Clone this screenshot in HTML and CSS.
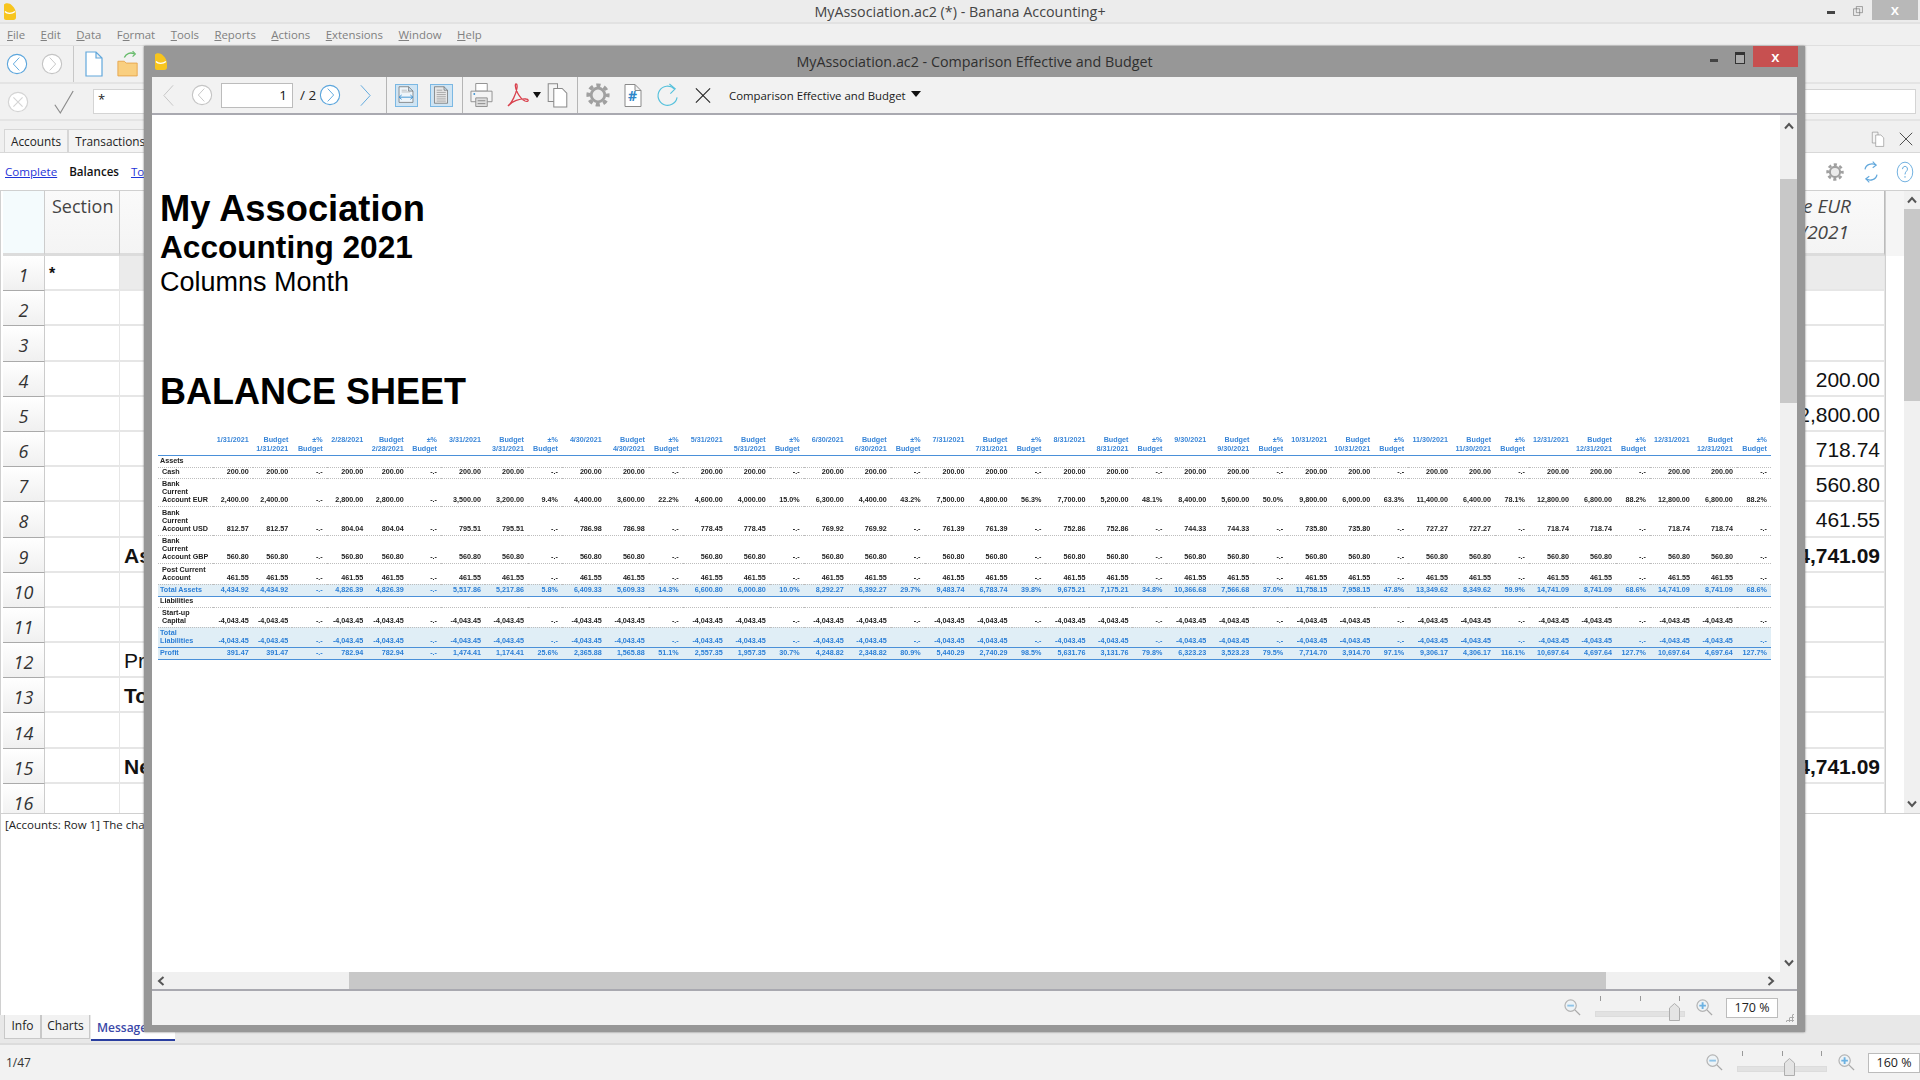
FILE: index.html
```html
<!DOCTYPE html>
<html lang="en">
<head>
<meta charset="utf-8">
<title>MyAssociation.ac2 (*) - Banana Accounting+</title>
<link rel="stylesheet" href="styles.css">
</head>
<body>
<svg class="defs" width="0" height="0" aria-hidden="true">
  <defs>
    <symbol id="logo" viewBox="0 0 12 17"><path d="M0 1.5 C2 -.5 6 0 8 2.500 C11 5 12 8 12 12 L12 14.500 C12 16 11 17 9.500 17 L2 17 C.8 17 0 16 0 15 Z" fill="#f7c51e"/><path d="M1 8.500 C3 11 8 11 11 8.500" fill="none" stroke="#fff" stroke-width="1.300"/></symbol>
    <symbol id="circ-l" viewBox="0 0 24 24"><circle cx="12" cy="12" r="10.500" fill="#fff" stroke="currentColor" stroke-width="1.200"/><polyline points="14.500,5 8,12 14.500,19" fill="none" stroke="currentColor" stroke-width="1"/></symbol>
    <symbol id="circ-r" viewBox="0 0 24 24"><circle cx="12" cy="12" r="10.500" fill="#fff" stroke="currentColor" stroke-width="1.200"/><polyline points="9.500,5 16,12 9.500,19" fill="none" stroke="currentColor" stroke-width="1"/></symbol>
    <symbol id="chev-l" viewBox="0 0 14 24"><polyline points="12,1 2,12 12,23" fill="none" stroke="currentColor" stroke-width="1"/></symbol>
    <symbol id="chev-r" viewBox="0 0 14 24"><polyline points="2,1 12,12 2,23" fill="none" stroke="currentColor" stroke-width="1"/></symbol>
    <symbol id="page" viewBox="0 0 18 26"><path d="M1 1 H11 L17 7 V25 H1 Z M11 1 V7 H17" fill="#fff" stroke="#62a8dc" stroke-width="1.200"/></symbol>
    <symbol id="folder" viewBox="0 0 24 30"><path d="M1 12 H8 L10 14 H22 V28 H1 Z" fill="#f9cf80" stroke="#e6a44c"/><path d="M8 8 C10 3 15 2 19 4" fill="none" stroke="#66bb6a" stroke-width="1.500"/><polyline points="17,1 20,4 17,7" fill="none" stroke="#66bb6a" stroke-width="1.300"/></symbol>
    <symbol id="tick" viewBox="0 0 24 28"><polyline points="2,17 8,26 22,2" fill="none" stroke="#8c8c8c" stroke-width="1.300"/></symbol>
    <symbol id="x-circ" viewBox="0 0 24 24"><circle cx="12" cy="12" r="10.500" fill="#fff" stroke="#d4d4d4" stroke-width="1.300"/><path d="M7 7 L17 17 M17 7 L7 17" stroke="#d4d4d4" stroke-width="1.200"/></symbol>
    <symbol id="fit-w" viewBox="0 0 22 23"><path d="M3 2 H14 L19 7 V20 H3 Z M14 2 V7 H19" fill="#eef5fa" stroke="#666" stroke-width=".8"/><path d="M6 6 H12 M6 8 H16" stroke="#aaa" stroke-width=".8"/><path d="M3 14 H19 M6 11.500 L3 14 L6 16.500 M16 11.500 L19 14 L16 16.500" fill="none" stroke="#3f93d3" stroke-width="1.100"/></symbol>
    <symbol id="fit-p" viewBox="0 0 23 23"><path d="M4 2 H15 L19 6 V21 H4 Z M15 2 V6 H19" fill="#e6e6e6" stroke="#666" stroke-width=".8"/><path d="M6.500 6 H13 M6.500 8.500 H17 M6.500 11 H17 M6.500 13.500 H17 M6.500 16 H17 M6.500 18.500 H17" stroke="#999" stroke-width=".9"/></symbol>
    <symbol id="printer" viewBox="0 0 24 26"><path d="M6 1 H18 V9 H6 Z" fill="#fff" stroke="#909090"/><path d="M1 9 H23 V20 H1 Z" fill="#f4f4f4" stroke="#909090"/><circle cx="4.500" cy="12" r="1" fill="#3f93d3"/><path d="M6 16 H18 V25 H6 Z" fill="#ddd" stroke="#909090"/><path d="M8 19 H16 M8 22 H16" stroke="#888"/></symbol>
    <symbol id="pdf" viewBox="0 0 24 26"><path d="M2 24 C6 21 10 12 11 6 C11.500 2 10 1 9.500 2.500 C8.500 6 13 16 19 19 C23 20.500 23 17 20 17 C14 16.500 6 19 2 24 Z" fill="none" stroke="#d9404c" stroke-width="1.300"/></symbol>
    <symbol id="copy" viewBox="0 0 24 28"><path d="M2 2 H12 V21 H2 Z" fill="#f4f4f4" stroke="#8a8a8a" stroke-width="1.100"/><path d="M8 7 H17 L22 12 V27 H8 Z" fill="#fff" stroke="#8a8a8a" stroke-width="1.100"/></symbol>
    <symbol id="gear" viewBox="0 0 24 24"><circle cx="12" cy="12" r="9.800" fill="none" stroke="#a0a0a0" stroke-width="3.600" stroke-dasharray="4.200 3.500" stroke-dashoffset="2"/><circle cx="12" cy="12" r="6.800" fill="#ececec" stroke="#a0a0a0" stroke-width="2.800"/></symbol>
    <symbol id="docnum" viewBox="0 0 18 24"><path d="M1 1 H11 L17 7 V23 H1 Z M11 1 V7 H17" fill="#fff" stroke="#8a8a8a"/></symbol>
    <symbol id="refresh" viewBox="0 0 24 26"><path d="M19 6 A10 10 0 1 0 22 15" fill="none" stroke="#55c1dc" stroke-width="1.200"/><polyline points="14,1 20,6 15,11" fill="none" stroke="#55c1dc" stroke-width="1.200"/></symbol>
    <symbol id="refresh2" viewBox="0 0 20 28"><path d="M3 11 C4 5 11 3 16 6 M17 17 C16 23 9 25 4 22" fill="none" stroke="#62a8dc" stroke-width="1.400"/><polyline points="12,2 16,6 12,9" fill="none" stroke="#62a8dc" stroke-width="1.300"/><polyline points="8,19 4,22 8,26" fill="none" stroke="#62a8dc" stroke-width="1.300"/></symbol>
    <symbol id="cross" viewBox="0 0 18 18"><path d="M1 1 L17 17 M17 1 L1 17" stroke="currentColor" stroke-width="1.200"/></symbol>
    <symbol id="restore" viewBox="0 0 18 18"><path d="M6 1 H17 V12 H6 Z M1 5 H12 V17 H1 Z" fill="#ececec" stroke="#666"/></symbol>
    <symbol id="help" viewBox="0 0 22 26"><ellipse cx="11" cy="13" rx="9.500" ry="12" fill="#fff" stroke="#62a8dc" stroke-width="1.100"/><path d="M8 9.500 C8 5 14 5 14 9.500 C14 12 11 12.500 11 16 M11 18 V20" fill="none" stroke="#62a8dc" stroke-width="1.200"/></symbol>
    <symbol id="zoom-out" viewBox="0 0 18 18"><circle cx="7" cy="7" r="6" fill="#eef3f6" stroke="#b4b4b4" stroke-width="1.300"/><path d="M3.500 7 H10.500" stroke="#8fc4e8" stroke-width="2"/><path d="M11.500 11.500 L17 17" stroke="#aaa" stroke-width="1.300"/></symbol>
    <symbol id="zoom-in" viewBox="0 0 18 18"><circle cx="7" cy="7" r="6" fill="#eef3f6" stroke="#b4b4b4" stroke-width="1.300"/><path d="M3.500 7 H10.500 M7 3.500 V10.500" stroke="#6db2e2" stroke-width="2"/><path d="M11.500 11.500 L17 17" stroke="#aaa" stroke-width="1.300"/></symbol>
    <symbol id="thumb" viewBox="0 0 11 18"><path d="M.5 5 L5.500 .5 L10.500 5 V17.500 H.5 Z" fill="#e4e4e4" stroke="#aeaeae"/></symbol>
    <symbol id="ar-u" viewBox="0 0 10 8"><polyline points="1,6.500 5,2 9,6.500" fill="none" stroke="#555" stroke-width="2"/></symbol>
    <symbol id="ar-d" viewBox="0 0 10 8"><polyline points="1,1.500 5,6 9,1.500" fill="none" stroke="#555" stroke-width="2"/></symbol>
    <symbol id="ar-l" viewBox="0 0 8 10"><polyline points="6.500,1 2,5 6.500,9" fill="none" stroke="#555" stroke-width="2"/></symbol>
    <symbol id="ar-r" viewBox="0 0 8 10"><polyline points="1.500,1 6,5 1.500,9" fill="none" stroke="#555" stroke-width="2"/></symbol>
  </defs>
</svg>

<div class="app">
  <header class="titlebar">
    <svg class="logo"><use href="#logo"/></svg>
    <div class="apptitle">MyAssociation.ac2 (*) - Banana Accounting+</div>
    <div class="winctl">
      <span class="min"></span>
      <svg class="rest"><use href="#restore"/></svg>
      <span class="close close-gray">x</span>
    </div>
  </header>
  <nav class="menubar">
    <span><u>F</u>ile</span><span><u>E</u>dit</span><span><u>D</u>ata</span><span>F<u>o</u>rmat</span><span><u>T</u>ools</span><span><u>R</u>eports</span><span><u>A</u>ctions</span><span><u>E</u>xtensions</span><span><u>W</u>indow</span><span><u>H</u>elp</span>
  </nav>
  <div class="tool1">
    <svg class="ic22 blue"><use href="#circ-l"/></svg>
    <svg class="ic22 gray mar-fwd"><use href="#circ-r"/></svg>
    <span class="vsep"></span>
    <svg class="ic-new"><use href="#page"/></svg>
    <svg class="ic-open"><use href="#folder"/></svg>
  </div>
  <div class="tool2">
    <svg class="ic22"><use href="#x-circ"/></svg>
    <svg class="ic-tick"><use href="#tick"/></svg>
    <div class="cellinput">*</div>
  </div>
  <div class="tabrow">
    <div class="tabs-top">
      <span class="ttab">Accounts</span><span class="ttab">Transactions</span>
    </div>
    <div class="panelctl">
      <svg class="ic-rest2"><use href="#copy"/></svg>
      <svg class="ic-cross"><use href="#cross"/></svg>
    </div>
  </div>
  <div class="linkrow">
    <div class="views"><a>Complete</a><b>Balances</b><a>Totals</a></div>
    <div class="viewtools">
      <span class="mini-caret"></span>
      <svg class="ic-gear2"><use href="#gear"/></svg>
      <svg class="ic-ref2"><use href="#refresh2"/></svg>
      <svg class="ic-help"><use href="#help"/></svg>
    </div>
  </div>
  <div class="sheetwrap">
    <div class="sheet">
      <div class="sh corner"></div><div class="sh">Section</div><div class="sh"></div><div class="sh it"><span>Balance EUR</span><span class="dateh">12/31/2021</span></div>
      <div class="rn">1</div><div class="c star">*</div><div class="c grayrow"></div><div class="c grayrow"></div>
      <div class="rn">2</div><div class="c"></div><div class="c"></div><div class="c"></div>
      <div class="rn">3</div><div class="c"></div><div class="c"></div><div class="c"></div>
      <div class="rn">4</div><div class="c"></div><div class="c"></div><div class="c n">200.00</div>
      <div class="rn">5</div><div class="c"></div><div class="c"></div><div class="c n">12,800.00</div>
      <div class="rn">6</div><div class="c"></div><div class="c"></div><div class="c n">718.74</div>
      <div class="rn">7</div><div class="c"></div><div class="c"></div><div class="c n">560.80</div>
      <div class="rn">8</div><div class="c"></div><div class="c"></div><div class="c n">461.55</div>
      <div class="rn">9</div><div class="c"></div><div class="c d bd">Assets</div><div class="c n bd">14,741.09</div>
      <div class="rn">10</div><div class="c"></div><div class="c"></div><div class="c"></div>
      <div class="rn">11</div><div class="c"></div><div class="c"></div><div class="c"></div>
      <div class="rn">12</div><div class="c"></div><div class="c d">Profit</div><div class="c"></div>
      <div class="rn">13</div><div class="c"></div><div class="c d bd">Total</div><div class="c"></div>
      <div class="rn">14</div><div class="c"></div><div class="c"></div><div class="c"></div>
      <div class="rn">15</div><div class="c"></div><div class="c d bd">Net</div><div class="c n bd">14,741.09</div>
      <div class="rn">16</div><div class="c"></div><div class="c"></div><div class="c"></div>
    </div>
    <div class="sheet-side"></div>
    <div class="sb-v main-sb">
      <svg class="ar-v"><use href="#ar-u"/></svg>
      <div class="thumb-main"></div>
      <svg class="ar-v ar-end"><use href="#ar-d"/></svg>
    </div>
  </div>
  <div class="msgpane">[Accounts: Row 1] The cha</div>
  <div class="bottabs">
    <span class="btab b-info">Info</span><span class="btab b-charts">Charts</span><span class="btab active">Messages</span>
  </div>
  <footer class="status">
    <span class="pos">1/47</span>
    <div class="zoomctl">
      <svg class="zi"><use href="#zoom-out"/></svg>
      <div class="slider"><i class="t1"></i><i class="t2"></i><i class="t3"></i><svg class="th th160"><use href="#thumb"/></svg></div>
      <svg class="zi zplus"><use href="#zoom-in"/></svg>
      <div class="zval">160 %</div>
    </div>
  </footer>

  <section class="dialog">
    <div class="dlgtitle">
      <svg class="logo dlglogo"><use href="#logo"/></svg>
      <div class="dlgname">MyAssociation.ac2 - Comparison Effective and Budget</div>
      <span class="min dmin"></span>
      <span class="maxi"></span>
      <span class="close close-red">x</span>
    </div>
    <div class="dlgbody">
      <div class="dtool">
        <span class="slot w33"><svg class="chev gray"><use href="#chev-l"/></svg></span>
        <span class="slot w34"><svg class="ic22 gray"><use href="#circ-l"/></svg></span>
        <div class="pageinput">1</div>
        <span class="pagecount">/ 2</span>
        <span class="slot w34"><svg class="ic22 blue"><use href="#circ-r"/></svg></span>
        <span class="slot w36"><svg class="chev blue"><use href="#chev-r"/></svg></span>
        <span class="dsep s1"></span>
        <span class="toggled t-a"><svg class="fit"><use href="#fit-w"/></svg></span>
        <span class="toggled t-b"><svg class="fit"><use href="#fit-p"/></svg></span>
        <span class="dsep s2"></span>
        <span class="slot w40"><svg class="ic-print"><use href="#printer"/></svg></span>
        <span class="slot w29"><svg class="ic-pdf"><use href="#pdf"/></svg></span>
        <span class="caret-sm"></span>
        <span class="slot w36"><svg class="ic-copy"><use href="#copy"/></svg></span>
        <span class="dsep s3"></span>
        <span class="slot w40"><svg class="ic-gear"><use href="#gear"/></svg></span>
        <span class="slot w30 hashwrap"><svg class="ic-doc"><use href="#docnum"/></svg><b class="hash">#</b></span>
        <span class="slot w38"><svg class="ic-ref"><use href="#refresh"/></svg></span>
        <span class="slot w34"><svg class="ic-x"><use href="#cross"/></svg></span>
        <span class="combo">Comparison Effective and Budget</span>
        <span class="caret-lg"></span>
      </div>
      <div class="reportrow">
        <main class="report">
          <h1 class="rt1">My Association</h1>
          <h2 class="rt2">Accounting 2021</h2>
          <p class="rt3">Columns Month</p>
          <h2 class="rt4">BALANCE SHEET</h2>
          <table class="rep">
            <colgroup>
              <col class="cl"><col class="a1"><col class="a1"><col class="a2"><col class="b1"><col class="b2"><col class="b3">
              <col class="x1"><col class="x2"><col class="x3"><col class="x1"><col class="x2"><col class="x3"><col class="x1"><col class="x2"><col class="x3"><col class="x1"><col class="x2"><col class="x3"><col class="x1"><col class="x2"><col class="x3"><col class="x1"><col class="x2"><col class="x3"><col class="x1"><col class="x2"><col class="x3"><col class="x1"><col class="x2"><col class="x3"><col class="x1"><col class="x2"><col class="x3"><col class="x1"><col class="x2"><col class="x3"><col class="x1"><col class="x2"><col class="x3">
            </colgroup>
            <thead>
              <tr class="hd"><th></th>
                <th>1/31/2021</th><th>Budget<br>1/31/2021</th><th>±%<br>Budget</th>
                <th>2/28/2021</th><th>Budget<br>2/28/2021</th><th>±%<br>Budget</th>
                <th>3/31/2021</th><th>Budget<br>3/31/2021</th><th>±%<br>Budget</th>
                <th>4/30/2021</th><th>Budget<br>4/30/2021</th><th>±%<br>Budget</th>
                <th>5/31/2021</th><th>Budget<br>5/31/2021</th><th>±%<br>Budget</th>
                <th>6/30/2021</th><th>Budget<br>6/30/2021</th><th>±%<br>Budget</th>
                <th>7/31/2021</th><th>Budget<br>7/31/2021</th><th>±%<br>Budget</th>
                <th>8/31/2021</th><th>Budget<br>8/31/2021</th><th>±%<br>Budget</th>
                <th>9/30/2021</th><th>Budget<br>9/30/2021</th><th>±%<br>Budget</th>
                <th>10/31/2021</th><th>Budget<br>10/31/2021</th><th>±%<br>Budget</th>
                <th>11/30/2021</th><th>Budget<br>11/30/2021</th><th>±%<br>Budget</th>
                <th>12/31/2021</th><th>Budget<br>12/31/2021</th><th>±%<br>Budget</th>
                <th>12/31/2021</th><th>Budget<br>12/31/2021</th><th>±%<br>Budget</th>
              </tr>
            </thead>
            <tbody>
              <tr class="sec h12"><td class="l">Assets</td><td colspan="39"></td></tr>
              <tr class="h11"><td class="l i">Cash</td><td>200.00</td><td>200.00</td><td>-.-</td><td>200.00</td><td>200.00</td><td>-.-</td><td>200.00</td><td>200.00</td><td>-.-</td><td>200.00</td><td>200.00</td><td>-.-</td><td>200.00</td><td>200.00</td><td>-.-</td><td>200.00</td><td>200.00</td><td>-.-</td><td>200.00</td><td>200.00</td><td>-.-</td><td>200.00</td><td>200.00</td><td>-.-</td><td>200.00</td><td>200.00</td><td>-.-</td><td>200.00</td><td>200.00</td><td>-.-</td><td>200.00</td><td>200.00</td><td>-.-</td><td>200.00</td><td>200.00</td><td>-.-</td><td>200.00</td><td>200.00</td><td>-.-</td></tr>
              <tr class="h28"><td class="l i">Bank<br>Current<br>Account EUR</td><td>2,400.00</td><td>2,400.00</td><td>-.-</td><td>2,800.00</td><td>2,800.00</td><td>-.-</td><td>3,500.00</td><td>3,200.00</td><td>9.4%</td><td>4,400.00</td><td>3,600.00</td><td>22.2%</td><td>4,600.00</td><td>4,000.00</td><td>15.0%</td><td>6,300.00</td><td>4,400.00</td><td>43.2%</td><td>7,500.00</td><td>4,800.00</td><td>56.3%</td><td>7,700.00</td><td>5,200.00</td><td>48.1%</td><td>8,400.00</td><td>5,600.00</td><td>50.0%</td><td>9,800.00</td><td>6,000.00</td><td>63.3%</td><td>11,400.00</td><td>6,400.00</td><td>78.1%</td><td>12,800.00</td><td>6,800.00</td><td>88.2%</td><td>12,800.00</td><td>6,800.00</td><td>88.2%</td></tr>
              <tr class="h29"><td class="l i">Bank<br>Current<br>Account USD</td><td>812.57</td><td>812.57</td><td>-.-</td><td>804.04</td><td>804.04</td><td>-.-</td><td>795.51</td><td>795.51</td><td>-.-</td><td>786.98</td><td>786.98</td><td>-.-</td><td>778.45</td><td>778.45</td><td>-.-</td><td>769.92</td><td>769.92</td><td>-.-</td><td>761.39</td><td>761.39</td><td>-.-</td><td>752.86</td><td>752.86</td><td>-.-</td><td>744.33</td><td>744.33</td><td>-.-</td><td>735.80</td><td>735.80</td><td>-.-</td><td>727.27</td><td>727.27</td><td>-.-</td><td>718.74</td><td>718.74</td><td>-.-</td><td>718.74</td><td>718.74</td><td>-.-</td></tr>
              <tr class="h28"><td class="l i">Bank<br>Current<br>Account GBP</td><td>560.80</td><td>560.80</td><td>-.-</td><td>560.80</td><td>560.80</td><td>-.-</td><td>560.80</td><td>560.80</td><td>-.-</td><td>560.80</td><td>560.80</td><td>-.-</td><td>560.80</td><td>560.80</td><td>-.-</td><td>560.80</td><td>560.80</td><td>-.-</td><td>560.80</td><td>560.80</td><td>-.-</td><td>560.80</td><td>560.80</td><td>-.-</td><td>560.80</td><td>560.80</td><td>-.-</td><td>560.80</td><td>560.80</td><td>-.-</td><td>560.80</td><td>560.80</td><td>-.-</td><td>560.80</td><td>560.80</td><td>-.-</td><td>560.80</td><td>560.80</td><td>-.-</td></tr>
              <tr class="h21"><td class="l i">Post Current<br>Account</td><td>461.55</td><td>461.55</td><td>-.-</td><td>461.55</td><td>461.55</td><td>-.-</td><td>461.55</td><td>461.55</td><td>-.-</td><td>461.55</td><td>461.55</td><td>-.-</td><td>461.55</td><td>461.55</td><td>-.-</td><td>461.55</td><td>461.55</td><td>-.-</td><td>461.55</td><td>461.55</td><td>-.-</td><td>461.55</td><td>461.55</td><td>-.-</td><td>461.55</td><td>461.55</td><td>-.-</td><td>461.55</td><td>461.55</td><td>-.-</td><td>461.55</td><td>461.55</td><td>-.-</td><td>461.55</td><td>461.55</td><td>-.-</td><td>461.55</td><td>461.55</td><td>-.-</td></tr>
              <tr class="tot h12"><td class="l">Total Assets</td><td>4,434.92</td><td>4,434.92</td><td>-.-</td><td>4,826.39</td><td>4,826.39</td><td>-.-</td><td>5,517.86</td><td>5,217.86</td><td>5.8%</td><td>6,409.33</td><td>5,609.33</td><td>14.3%</td><td>6,600.80</td><td>6,000.80</td><td>10.0%</td><td>8,292.27</td><td>6,392.27</td><td>29.7%</td><td>9,483.74</td><td>6,783.74</td><td>39.8%</td><td>9,675.21</td><td>7,175.21</td><td>34.8%</td><td>10,366.68</td><td>7,566.68</td><td>37.0%</td><td>11,758.15</td><td>7,958.15</td><td>47.8%</td><td>13,349.62</td><td>8,349.62</td><td>59.9%</td><td>14,741.09</td><td>8,741.09</td><td>68.6%</td><td>14,741.09</td><td>8,741.09</td><td>68.6%</td></tr>
              <tr class="sec h11"><td class="l">Liabilities</td><td colspan="39"></td></tr>
              <tr class="h20"><td class="l i">Start-up<br>Capital</td><td>-4,043.45</td><td>-4,043.45</td><td>-.-</td><td>-4,043.45</td><td>-4,043.45</td><td>-.-</td><td>-4,043.45</td><td>-4,043.45</td><td>-.-</td><td>-4,043.45</td><td>-4,043.45</td><td>-.-</td><td>-4,043.45</td><td>-4,043.45</td><td>-.-</td><td>-4,043.45</td><td>-4,043.45</td><td>-.-</td><td>-4,043.45</td><td>-4,043.45</td><td>-.-</td><td>-4,043.45</td><td>-4,043.45</td><td>-.-</td><td>-4,043.45</td><td>-4,043.45</td><td>-.-</td><td>-4,043.45</td><td>-4,043.45</td><td>-.-</td><td>-4,043.45</td><td>-4,043.45</td><td>-.-</td><td>-4,043.45</td><td>-4,043.45</td><td>-.-</td><td>-4,043.45</td><td>-4,043.45</td><td>-.-</td></tr>
              <tr class="tot h20"><td class="l">Total<br>Liabilities</td><td>-4,043.45</td><td>-4,043.45</td><td>-.-</td><td>-4,043.45</td><td>-4,043.45</td><td>-.-</td><td>-4,043.45</td><td>-4,043.45</td><td>-.-</td><td>-4,043.45</td><td>-4,043.45</td><td>-.-</td><td>-4,043.45</td><td>-4,043.45</td><td>-.-</td><td>-4,043.45</td><td>-4,043.45</td><td>-.-</td><td>-4,043.45</td><td>-4,043.45</td><td>-.-</td><td>-4,043.45</td><td>-4,043.45</td><td>-.-</td><td>-4,043.45</td><td>-4,043.45</td><td>-.-</td><td>-4,043.45</td><td>-4,043.45</td><td>-.-</td><td>-4,043.45</td><td>-4,043.45</td><td>-.-</td><td>-4,043.45</td><td>-4,043.45</td><td>-.-</td><td>-4,043.45</td><td>-4,043.45</td><td>-.-</td></tr>
              <tr class="tot h12"><td class="l">Profit</td><td>391.47</td><td>391.47</td><td>-.-</td><td>782.94</td><td>782.94</td><td>-.-</td><td>1,474.41</td><td>1,174.41</td><td>25.6%</td><td>2,365.88</td><td>1,565.88</td><td>51.1%</td><td>2,557.35</td><td>1,957.35</td><td>30.7%</td><td>4,248.82</td><td>2,348.82</td><td>80.9%</td><td>5,440.29</td><td>2,740.29</td><td>98.5%</td><td>5,631.76</td><td>3,131.76</td><td>79.8%</td><td>6,323.23</td><td>3,523.23</td><td>79.5%</td><td>7,714.70</td><td>3,914.70</td><td>97.1%</td><td>9,306.17</td><td>4,306.17</td><td>116.1%</td><td>10,697.64</td><td>4,697.64</td><td>127.7%</td><td>10,697.64</td><td>4,697.64</td><td>127.7%</td></tr>
            </tbody>
          </table>
        </main>
        <div class="sb-v dlg-sb">
          <svg class="ar-v ar-first"><use href="#ar-u"/></svg>
          <div class="thumb-dlg"></div>
          <svg class="ar-v ar-end"><use href="#ar-d"/></svg>
        </div>
      </div>
      <div class="sb-h">
        <svg class="ar-h"><use href="#ar-l"/></svg>
        <div class="thumb-h"></div>
        <svg class="ar-h"><use href="#ar-r"/></svg>
      </div>
      <div class="dlgstatus">
        <div class="zoomctl dz">
          <svg class="zi"><use href="#zoom-out"/></svg>
          <div class="slider"><i class="t1"></i><i class="t2"></i><i class="t3"></i><svg class="th th170"><use href="#thumb"/></svg></div>
          <svg class="zi zplus"><use href="#zoom-in"/></svg>
          <div class="zval">170 %</div>
        </div>
        <span class="grip"></span>
      </div>
    </div>
  </section>
</div>
</body>
</html>
```

FILE: styles.css
```css
* { box-sizing: border-box; }
html, body { margin: 0; padding: 0; background: #f0f0f0; }
.defs { position: absolute; }
svg { display: block; flex: none; }
.app {
  position: relative;
  display: flex;
  flex-direction: column;
  width: 1920px;
  height: 1080px;
  overflow: hidden;
  font-family: "Open Sans", "Noto Sans", sans-serif;
  color: #222;
  background: #f0f0f0;
}
.blue { color: #5aa5dc; }
.gray { color: #c4c4c4; }

/* title bar */
.titlebar {
  position: relative;
  flex: none;
  height: 24px;
  display: flex;
  align-items: center;
  justify-content: center;
  background: #ececec;
  border-bottom: 2px solid #e2e2e2;
}
.logo { position: absolute; left: 4px; top: 3px; width: 12px; height: 17px; }
.apptitle { font-size: 14.3px; color: #444; }
.winctl { position: absolute; right: 2px; top: 0; display: flex; align-items: flex-start; }
.min { display: block; width: 8px; height: 3px; background: #444; }
.winctl .min { margin: 11px 18px 0 0; }
.rest { width: 10px; height: 14px; margin: 4px 9px 0 0; }
.close { display: block; text-align: center; color: #fff; font-size: 15px; font-weight: 600; line-height: 19px; }
.close-gray { width: 46px; height: 20px; background: #b8b8b8; }

/* menu */
.menubar {
  flex: none;
  height: 22px;
  display: flex;
  align-items: center;
  gap: 15.5px;
  padding-left: 7px;
  font-size: 11.4px;
  color: #808080;
  background: #f0f0f0;
  border-bottom: 1px solid #dfdfdf;
}

/* toolbars */
.tool1 {
  flex: none;
  height: 38px;
  display: flex;
  align-items: center;
  padding: 0 0 0 6px;
  background: #f1f1f1;
  border-bottom: 2px solid #e4e4e4;
}
.ic22 { width: 22px; height: 22px; }
.mar-fwd { margin-left: 13px; }
.vsep { width: 1px; height: 36px; margin-left: 10px; background: #c8c8c8; }
.ic-new { width: 18px; height: 26px; margin-left: 11px; }
.ic-open { width: 22px; height: 30px; margin-left: 14px; }
.tool2 {
  flex: none;
  height: 37px;
  display: flex;
  align-items: center;
  padding-left: 7px;
  background: #f1f1f1;
  border-bottom: 2px solid #e4e4e4;
}
.ic-tick { width: 22px; height: 26px; margin-left: 24px; }
.cellinput {
  flex: 1;
  height: 25px;
  margin: 0 4px 0 18px;
  padding-left: 4px;
  font-size: 13px;
  line-height: 18px;
  background: #fff;
  border: 1px solid #d4d4d4;
}
.tabrow {
  flex: none;
  height: 32px;
  display: flex;
  justify-content: space-between;
  align-items: flex-end;
  padding-left: 4px;
  background: #f0f0f0;
  border-bottom: 1px solid #d8d8d8;
}
.tabs-top { display: flex; }
.ttab {
  display: block;
  height: 23px;
  padding: 0 6px;
  font-size: 11.8px;
  line-height: 22px;
  color: #222;
  border: 1px solid #d6d6d6;
  border-bottom: 0;
  background: #f4f4f4;
}
.panelctl { display: flex; align-items: center; height: 26px; padding-right: 7px; }
.ic-rest2 { width: 14px; height: 16px; }
.ic-cross { width: 14px; height: 14px; margin-left: 14px; color: #444; }
.linkrow {
  flex: none;
  height: 38px;
  display: flex;
  justify-content: space-between;
  align-items: center;
  padding: 0 6px 0 5px;
  background: #fff;
  border-bottom: 1px solid #d0d0d0;
}
.views { display: flex; gap: 12px; font-size: 11.6px; }
.views a { color: #1f35d8; text-decoration: underline; }
.views b { font-weight: 600; color: #111; }
.viewtools { display: flex; align-items: center; }
.mini-caret { width: 0; height: 0; border: 3px solid transparent; border-top: 4px solid #333; margin-right: 21px; margin-top: -6px; }
.ic-gear2 { width: 18px; height: 20px; }
.ic-ref2 { width: 18px; height: 24px; margin-left: 18px; }
.ic-help { width: 18px; height: 22px; margin-left: 16px; }

/* spreadsheet behind the dialog */
.sheetwrap {
  flex: none;
  height: 623px;
  display: flex;
  padding-left: 2px;
  overflow: hidden;
  background: #fff;
  border-left: 1px solid #d0d0d0;
  border-bottom: 1px solid #d0d0d0;
}
.sheet {
  flex: 1;
  display: grid;
  grid-template-columns: 42px 75px 1fr 105px;
  grid-template-rows: 65px;
  grid-auto-rows: 35.2px;
  align-content: start;
  overflow: hidden;
  border-right: 1px solid #cfcfcf;
}
.sh {
  display: flex;
  flex-direction: column;
  padding: 1px 0 0 7px;
  font-size: 18px;
  line-height: 28px;
  color: #444;
  background: linear-gradient(#fafafa, #f4f4f4);
  border-right: 1px solid #ccc;
  border-bottom: 3px solid #dcdcdc;
}
.corner { background: #f4fbfd; }
.it {
  align-items: flex-end;
  padding: 2px 33px 0 0;
  font-style: italic;
  white-space: nowrap;
  line-height: 26px;
  font-size: 19px;
  border-right: 1px solid #bbb;
}
.dateh { padding-right: 2px; }
.rn {
  display: flex;
  align-items: center;
  justify-content: center;
  padding-top: 4px;
  font-size: 18px;
  font-style: italic;
  color: #333;
  background: linear-gradient(#fff, #f0f0f0);
  border-right: 1px solid #ccc;
  border-bottom: 1px solid #aaa;
}
.c {
  border-right: 1px solid #e6e6e6;
  border-bottom: 2px solid #e6e6e6;
  font-family: "Liberation Sans", sans-serif;
  font-size: 21px;
  line-height: 35px;
  color: #111;
  white-space: nowrap;
  overflow: hidden;
}
.star { padding: 7px 0 0 4px; font-weight: 700; font-size: 16px; line-height: 22px; }
.grayrow { background: #ebebeb; }
.n { text-align: right; padding-right: 4px; }
.d { padding-left: 4px; }
.bd { font-weight: 700; }
.sheet-side { flex: none; width: 18px; background: linear-gradient(#f5f5f5 65px, #fff 65px); }
.sb-v { flex: none; display: flex; flex-direction: column; align-items: center; background: #f0f0f0; }
.main-sb { width: 16px; }
.ar-v { width: 10px; height: 8px; margin: 5px 0; flex: none; }
.ar-first { margin-top: 7px; }
.ar-end { margin-top: auto; }
.thumb-main { width: 100%; height: 192px; background: #c8c8c8; }

/* lower panes */
.msgpane {
  flex: none;
  height: 201px;
  padding: 1px 0 0 4px;
  font-size: 11.5px;
  line-height: 20px;
  color: #222;
  background: #fff;
  border-left: 1px solid #d0d0d0;
  white-space: nowrap;
}
.bottabs {
  flex: none;
  height: 30px;
  display: flex;
  align-items: flex-start;
  padding-left: 4px;
  background: #e8e8e8;
  border-bottom: 2px solid #dcdcdc;
}
.btab {
  height: 24px;
  font-size: 12px;
  line-height: 22px;
  text-align: center;
  color: #222;
  background: #f2f2f2;
  border: 1px solid #c8c8c8;
  border-top: 0;
}
.b-info { width: 37px; }
.b-charts { width: 49px; margin-right: 1px; }
.btab.active {
  width: 84px;
  height: 26px;
  padding: 2px 0 0 6px;
  text-align: left;
  color: #3a48a8;
  font-weight: 600;
  background: #fff;
  border: 0;
  border-bottom: 2px solid #2a3fa0;
}
.status {
  flex: 1;
  position: relative;
  display: flex;
  align-items: center;
  justify-content: space-between;
  padding-left: 6px;
  font-size: 12px;
  background: #f2f2f2;
}
.pos { color: #333; }
.zoomctl { display: flex; align-items: center; }
.zi { width: 17px; height: 17px; }
.slider { position: relative; width: 90px; height: 28px; margin-left: 14px; }
.slider::before { content: ""; position: absolute; left: 0; right: 0; top: 17px; height: 4px; background: #e2e2e2; border: 1px solid #dcdcdc; }
.slider i { position: absolute; top: 2px; width: 1px; height: 5px; background: #999; }
.t1 { left: 5px; }
.t2 { left: 45px; }
.t3 { left: 84px; }
.th { position: absolute; top: 9px; width: 11px; height: 18px; }
.th160 { left: 47px; }
.th170 { left: 74px; }
.zplus { margin-left: 11px; }
.zval {
  width: 52px;
  height: 20px;
  margin-left: 13px;
  font-size: 12.5px;
  line-height: 18px;
  text-align: center;
  color: #222;
  background: #fff;
  border: 1px solid #bcbcbc;
}

/* dialog window */
.dialog {
  position: absolute;
  left: 144px;
  top: 46px;
  width: 1661px;
  height: 986px;
  display: flex;
  flex-direction: column;
  padding: 0 8px 7px;
  background: #979797;
  box-shadow: 0 0 2px #777;
}
.dlgtitle { position: relative; flex: none; height: 31px; display: flex; align-items: center; justify-content: center; }
.dlglogo { left: 3px; top: 7px; }
.dlgname { font-size: 14.3px; color: #2f2f2f; }
.dmin { position: absolute; right: 79px; top: 13px; }
.maxi { position: absolute; right: 52px; top: 6px; width: 10px; height: 12px; border: 1px solid #333; border-top-width: 3px; background: #aaa; }
.close-red { position: absolute; right: -1px; top: 0; width: 45px; height: 21px; background: #c75050; line-height: 20px; }
.dlgbody { flex: 1; min-height: 0; display: flex; flex-direction: column; background: #f2f2f2; }
.dtool {
  flex: none;
  height: 38px;
  display: flex;
  align-items: center;
  border-bottom: 2px solid #a9a9b0;
  background: #f2f2f2;
}
.slot { display: flex; align-items: center; justify-content: center; height: 100%; }
.w29 { width: 29px; }
.w30 { width: 30px; }
.w33 { width: 33px; }
.w34 { width: 34px; }
.w36 { width: 36px; }
.w38 { width: 38px; }
.w40 { width: 40px; }
.chev { width: 13px; height: 23px; }
.pageinput {
  width: 72px;
  height: 25px;
  margin-left: 2px;
  padding-right: 5px;
  font-size: 13.5px;
  line-height: 23px;
  text-align: right;
  color: #111;
  background: #fff;
  border: 1px solid #bcbcbc;
}
.pagecount { width: 20px; padding-left: 7px; font-size: 13.5px; color: #222; white-space: nowrap; }
.dsep { width: 1px; height: 36px; background: #b5b5b5; }
.s1 { margin: 0 0 0 3px; }
.toggled { display: block; width: 23px; height: 23px; background: #cfe4f3; border: 1.5px solid #7bb8e3; }
.t-a { margin-left: 8px; }
.t-b { margin-left: 12px; }
.fit { width: 20px; height: 20px; }
.s2 { margin-left: 9px; }
.ic-print { width: 23px; height: 26px; margin-right: 4px; }
.ic-pdf { width: 24px; height: 26px; }
.caret-sm { width: 0; height: 0; margin-left: 1px; border: 4px solid transparent; border-top: 6px solid #111; border-bottom: 0; }
.ic-copy { width: 23px; height: 26px; margin-right: 4px; }
.s3 { margin-left: 0; }
.ic-gear { width: 24px; height: 24px; }
.hashwrap { position: relative; }
.ic-doc { width: 18px; height: 25px; }
.hash { position: absolute; left: 10px; top: 10px; font-size: 14px; line-height: 18px; color: #2e86c8; font-weight: 700; }
.ic-ref { width: 23px; height: 25px; }
.ic-x { width: 16px; height: 17px; color: #222; }
.combo { margin-left: 9px; font-size: 11.4px; color: #1a1a1a; white-space: nowrap; }
.caret-lg { width: 0; height: 0; margin: -3px 0 0 5px; border: 5px solid transparent; border-top: 6px solid #111; border-bottom: 0; }
.reportrow { flex: 1; min-height: 0; display: flex; }
.report {
  flex: 1;
  min-width: 0;
  padding: 0 0 0 6px;
  overflow: hidden;
  background: #fff;
  font-family: "Liberation Sans", Arial, sans-serif;
  color: #000;
}
.rt1, .rt2, .rt3, .rt4 { margin: 0; padding-left: 2px; white-space: nowrap; }
.rt1 { padding-top: 73px; font-size: 36.3px; line-height: 42px; font-weight: 700; }
.rt2 { font-size: 31.6px; line-height: 35px; font-weight: 700; }
.rt3 { font-size: 27px; line-height: 34px; }
.rt4 { padding-top: 72px; font-size: 36px; line-height: 42px; font-weight: 700; }
.rep {
  width: 1613px;
  margin-top: 23px;
  table-layout: fixed;
  border-collapse: collapse;
  font-size: 7.2px;
  line-height: 8.33px;
  filter: blur(.25px);
}
.cl { width: 55.3px; }
.a1 { width: 39.5px; }
.a2 { width: 34.4px; }
.b1 { width: 40.6px; }
.b2 { width: 40.4px; }
.b3 { width: 33.3px; }
.x1 { width: 44px; }
.x2 { width: 43px; }
.x3 { width: 33.9px; }
.rep th {
  height: 19px;
  padding: 0 4px 0 0;
  text-align: right;
  vertical-align: top;
  font-weight: 700;
  line-height: 8.8px;
  color: #3a86d8;
  border-bottom: 1px solid #4a90d9;
  white-space: nowrap;
}
.rep td {
  padding: 0 4px 1px 0;
  text-align: right;
  vertical-align: bottom;
  white-space: nowrap;
  font-weight: 700;
  color: #222;
  border-bottom: 1px dotted #bdbdbd;
}
.rep td.l { text-align: left; padding-left: 2px; padding-right: 0; }
.rep td.i { padding-left: 4px; }
.h11 { height: 11px; }
.h12 { height: 12px; }
.h20 { height: 20px; }
.h21 { height: 21px; }
.h28 { height: 28px; }
.h29 { height: 29px; }
.rep .tot td {
  background: #e0eef6;
  color: #2a7ed6;
  border-bottom: 1px solid #4a90d9;
}
.dlg-sb { width: 17px; }
.thumb-dlg { width: 100%; height: 224px; margin-top: 44px; background: #c8c8c8; }
.sb-h { flex: none; height: 17px; display: flex; align-items: center; background: #f0f0f0; padding: 0 22px 0 5px; }
.ar-h { width: 8px; height: 10px; }
.thumb-h { width: 1257px; height: 100%; margin-left: 184px; margin-right: auto; background: #c8c8c8; }
.dlgstatus {
  position: relative;
  flex: none;
  height: 36px;
  display: flex;
  align-items: center;
  justify-content: flex-end;
  padding-right: 19px;
  border-top: 2px solid #a9a9b0;
}
.dz .zi { margin-top: -2px; }
.grip {
  position: absolute;
  right: 3px;
  bottom: 3px;
  width: 9px;
  height: 9px;
  background: radial-gradient(circle, #aaa 1px, transparent 1.2px) 0 0 / 3px 3px;
  clip-path: polygon(100% 0, 100% 100%, 0 100%);
}
```
